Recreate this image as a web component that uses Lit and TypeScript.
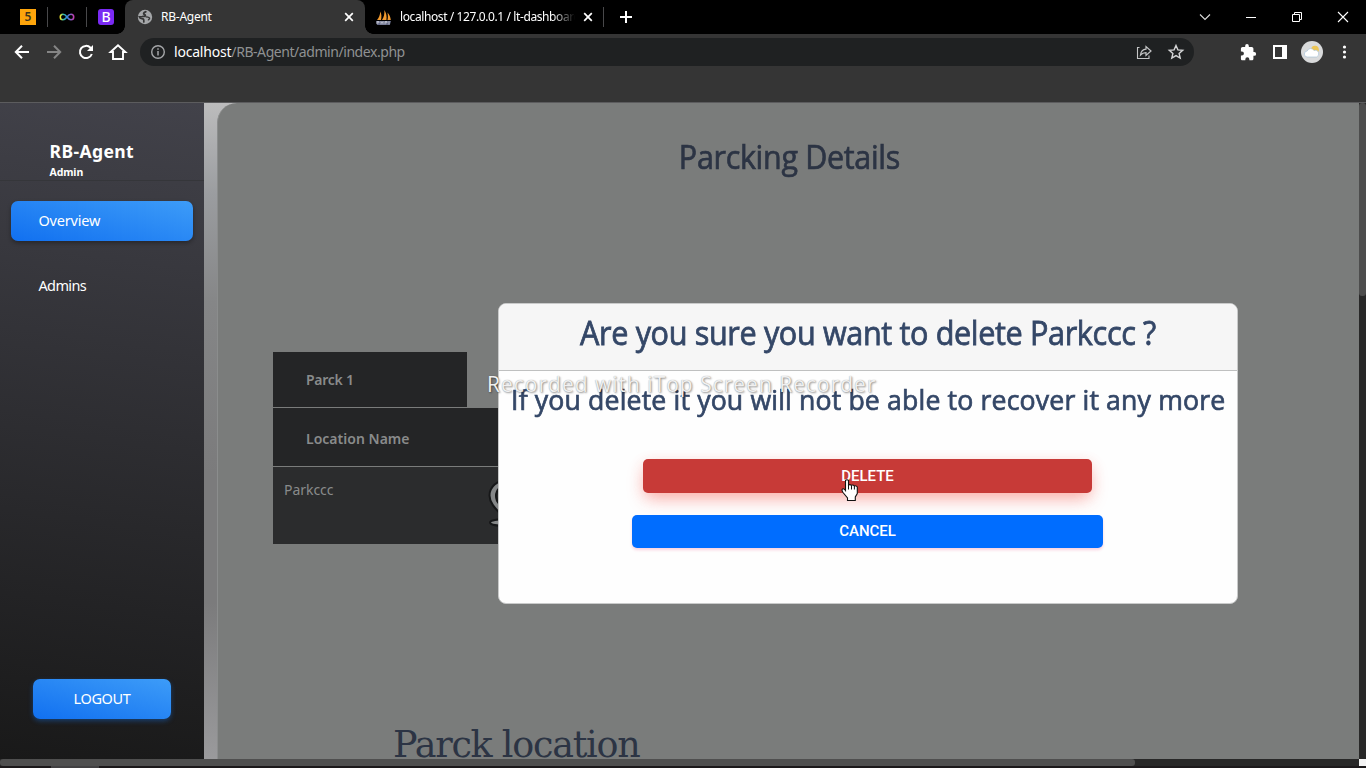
import { LitElement, html, css } from "lit";
import { customElement } from "lit/decorators.js";

const family = css`"Noto Sans", "Open Sans", sans-serif`;
const display = css`"Open Sans", "Noto Sans", sans-serif`;

@customElement("browser-bar")
class BrowserBar extends LitElement {
  static styles = css`
    :host { display: block; height: 103px; background: #353535; color: #fff; font-family: ${family}; box-sizing: border-box; border-bottom: 1px solid #5c5c5e; }
    svg { display: block; flex: none; }
    .tabs { height: 34px; background: #000; display: flex; align-items: center; }
    .pinned { display: flex; align-items: center; width: 125px; box-sizing: border-box; padding-left: 20px; }
    .rule { width: 1px; height: 20px; background: #48484a; margin: 0 11px 0 11px; }
    .rule.second { margin: 0 11px 0 10px; }
    .rule.last { margin: 0; }
    .five { width: 16px; height: 16px; background: #fea50b; color: #40351c; font: 600 12px/16px ${family}; text-align: center; }
    .bs { width: 16px; height: 16px; border-radius: 3px; background: #7a2af4; font: 500 14px/16px ${family}; text-align: center; }
    .tab { height: 34px; display: flex; align-items: center; box-sizing: border-box; font-size: 12px; white-space: nowrap; }
    .current { position: relative; width: 240px; background: #353535; border-radius: 8px 8px 0 0; padding: 0 9px 0 12px; }
    .current::before, .current::after { content: ""; position: absolute; bottom: 0; width: 8px; height: 8px; }
    .current::before { left: -8px; background: radial-gradient(circle at 0 0, #000 7.5px, #353535 8px); }
    .current::after { right: -8px; background: radial-gradient(circle at 100% 0, #000 7.5px, #353535 8px); }
    .name { flex: 1; overflow: hidden; margin-left: 8px; letter-spacing: -0.25px; line-height: 18px; }
    .other { width: 238px; padding: 0 8px 0 10px; }
    .faded { margin-right: 6px; -webkit-mask-image: linear-gradient(90deg, #000 87%, transparent); letter-spacing: -0.4px; }
    .newtab { margin-left: 14px; }
    .window { margin-left: auto; display: flex; align-items: center; padding-right: 17px; gap: 34px; }
    .tools { height: 36px; display: flex; align-items: center; padding: 0 0 0 12px; }
    .nav { display: flex; gap: 12px; width: 128px; flex: none; }
    .address { width: 1054px; flex: none; height: 28px; border-radius: 14px; background: #1f2122; display: flex; align-items: center; box-sizing: border-box; padding: 0 9px 0 10px; }
    .url { margin-left: 8px; font-size: 14px; letter-spacing: -0.44px; color: #8f9192; flex: 1; line-height: 20px; }
    .host { color: #fff; letter-spacing: -0.2px; }
    .marks { display: flex; gap: 14px; }
    .extras { display: flex; align-items: center; gap: 10px; margin-left: 44px; }
    .avatar { margin-left: -1px; }
  `;

  cross() {
    return html`<svg width="14" height="14" viewBox="0 0 14 14"><path d="M3.2 3.2l7.6 7.6M10.8 3.2l-7.6 7.6" stroke="#fff" stroke-width="1.7"/></svg>`;
  }

  render() {
    return html`
      <div class="tabs">
        <div class="pinned">
          <div class="five">5</div>
          <div class="rule"></div>
          <svg width="17" height="14" viewBox="0 0 17 14">
            <defs><linearGradient id="loop"><stop offset="0" stop-color="#f5e92b"/><stop offset=".25" stop-color="#31b9a5"/><stop offset=".5" stop-color="#348cdf"/><stop offset="1" stop-color="#c13bae"/></linearGradient></defs>
            <path d="M8 7C6.500 4.800 5.400 4.300 4 4.300a2.700 2.700 0 0 0 0 5.400C5.400 9.700 6.500 9 8 7S10.600 4.300 12 4.300a2.700 2.700 0 0 1 0 5.400C10.600 9.700 9.500 9.200 8 7z" fill="none" stroke="url(#loop)" stroke-width="1.600"/>
          </svg>
          <div class="rule second"></div>
          <div class="bs">B</div>
        </div>
        <div class="tab current">
          <svg width="16" height="16" viewBox="0 0 16 16"><circle cx="8" cy="8" r="7.200" fill="#a5a7a9"/><path d="M9.300 2.200C8.400 3.400 7 3 6.600 4.400 6.400 5.700 8.200 5 8.400 6.300c.2 1.300-2 1-3.200 1.200L2.300 7.700c.7 2.300 2.700 1.700 4 2.400 1 .6.200 1.600.6 3.500" fill="none" stroke="#353535" stroke-width="1.700"/><path d="M8.600 8.200c1.200-.6 3.400-.2 4 .9.300 1-1 1.200-1.400 2.300" fill="none" stroke="#353535" stroke-width="1.300"/></svg>
          <span class="name">RB-Agent</span>${this.cross()}
        </div>
        <div class="tab other">
          <svg width="17" height="17" viewBox="0 0 17 17"><path d="M2 11c2-2 3-5 3.300-8.500C6.500 5 6.800 8 6 11zM7 11c2-3 2.600-6 2.400-10 2 3 2.600 7 2 10zM12.500 11c.6-2.500.5-5 0-7.500 2 2 3 5 3.300 7.500z" fill="#f29a2e"/><path d="M1 12h15l-1.200 4H2z" fill="#666b87"/><path d="M2 15v-2.500h2v1.300H2M6 12v3.500M6 13.700h2M8 12v3.500M10 15.500v-3h2v1.300h-2M14 15.500V12" stroke="#c7cad7" stroke-width=".8" fill="none"/></svg>
          <span class="name faded">localhost / 127.0.0.1 / lt-dashboard</span>${this.cross()}
        </div>
        <div class="rule last"></div>
        <svg class="newtab" width="16" height="16" viewBox="0 0 16 16"><path d="M8 2v12M2 8h12" stroke="#fff" stroke-width="2"/></svg>
        <div class="window">
          <svg width="12" height="12" viewBox="0 0 12 12"><path d="M1 3.500l5 5 5-5" fill="none" stroke="#ddd" stroke-width="1.100"/></svg>
          <svg width="12" height="12" viewBox="0 0 12 12"><path d="M1 6.500h10" stroke="#fff"/></svg>
          <svg width="12" height="12" viewBox="0 0 12 12"><path d="M1.500 3.500h7v7h-7zM3.500 3V1.500h7v7H9" fill="none" stroke="#fff"/></svg>
          <svg width="12" height="12" viewBox="0 0 12 12"><path d="M1 1l10 10M11 1L1 11" stroke="#fff" stroke-width="1.100"/></svg>
        </div>
      </div>
      <div class="tools">
        <div class="nav">
          <svg width="20" height="20" viewBox="0 0 20 20"><path d="M17 10H4.500M10 3.800L3.800 10l6.200 6.200" fill="none" stroke="#fff" stroke-width="2"/></svg>
          <svg width="20" height="20" viewBox="0 0 20 20"><path d="M3 10h12.500M10 3.800l6.200 6.200-6.200 6.200" fill="none" stroke="#858585" stroke-width="2"/></svg>
          <svg width="20" height="20" viewBox="0 0 20 20"><path d="M15.800 12a6.100 6.100 0 1 1-1.300-6.200l1.500 1.700" fill="none" stroke="#fff" stroke-width="2"/><path d="M17 3v6h-6z" fill="#fff"/></svg>
          <svg width="20" height="20" viewBox="0 0 20 20"><path d="M2.600 10L10 3.200l7.400 6.800H15v7H5v-7z" fill="none" stroke="#fff" stroke-width="1.900"/></svg>
        </div>
        <div class="address">
          <svg width="16" height="16" viewBox="0 0 16 16"><circle cx="8" cy="8" r="6.300" fill="none" stroke="#a5a7a9" stroke-width="1.400"/><path d="M8 7v4.500M8 4.300v1.500" stroke="#a5a7a9" stroke-width="1.500"/></svg>
          <span class="url"><span class="host">localhost</span>/RB-Agent/admin/index.php</span>
          <div class="marks">
            <svg width="18" height="18" viewBox="0 0 18 18"><path d="M4.500 4.500H2.500v11h11.500V12.500" fill="none" stroke="#c5c6c7" stroke-width="1.100"/><path d="M5.500 12c.5-4 2.500-5.600 5.500-5.800V3.500l5 4.500-5 4.400V9.700c-2.500 0-4 .6-5.500 2.300z" fill="none" stroke="#c5c6c7" stroke-width="1.200"/></svg>
            <svg width="18" height="18" viewBox="0 0 18 18"><path d="M9 2.500l1.900 4.400 4.800.4-3.600 3.100 1.100 4.700L9 12.600l-4.200 2.500 1.100-4.700-3.600-3.100 4.800-.4z" fill="none" stroke="#d5d6d7" stroke-width="1.400"/></svg>
          </div>
        </div>
        <div class="extras">
          <svg width="20" height="20" viewBox="0 0 24 24"><path fill="#fff" d="M19.500 12H18.500V8c0-1.100-.9-2-2-2h-3.500V4.700a2.200 2.200 0 0 0-4.400 0V6H5.500c-1.100 0-2 .9-2 2v3.300h1.200a2.400 2.400 0 0 1 0 4.800H3.500V20c0 1.100.9 2 2 2h3.300v-1.200a2.400 2.400 0 0 1 4.800 0V22h2.900c1.100 0 2-.9 2-2v-3.500h1a2.250 2.250 0 0 0 0-4.500z"/></svg>
          <svg width="24" height="20" viewBox="0 0 24 20"><path fill="#fff" fill-rule="evenodd" d="M5 3h14v14H5zM7 5v10h7V5z"/></svg>
          <svg class="avatar" width="22" height="22" viewBox="0 0 22 22"><circle cx="11" cy="11" r="11" fill="#d9dadb"/><circle cx="14" cy="8.500" r="3.800" fill="#ecc555"/><path d="M6.500 16a3 3 0 0 1-.3-6 3.700 3.700 0 0 1 6.700-.6 3.300 3.300 0 0 1 2.600 6.600z" fill="#fff" stroke="#9fbcd4" stroke-width=".6"/></svg>
          <svg width="22" height="20" viewBox="0 0 22 20"><g fill="#fff"><circle cx="11.500" cy="5" r="1.600"/><circle cx="11.500" cy="10" r="1.600"/><circle cx="11.500" cy="15" r="1.600"/></g></svg>
        </div>
      </div>`;
  }
}

@customElement("side-nav")
class SideNav extends LitElement {
  static styles = css`
    :host { width: 204px; box-sizing: border-box; display: flex; flex-direction: column; background: linear-gradient(188deg, #42424a, #191919); color: #fff; font-family: ${family}; }
    .brand { height: 78px; box-sizing: border-box; padding: 36px 0 0 49.500px; border-bottom: 1px solid #35363a; }
    .title { font-size: 17.500px; font-weight: 700; line-height: 24px; letter-spacing: .4px; }
    .role { font-size: 10.500px; font-weight: 700; line-height: 14px; margin-top: 2px; letter-spacing: -.1px; }
    .item { height: 40px; line-height: 39px; margin: 20px 11px 0; padding-left: 27.500px; border-radius: 7px; font-size: 14.500px; letter-spacing: -.2px; }
    .active, .logout { background: linear-gradient(195deg, #3d9cf8, #1170f0); box-shadow: 0 2px 4px #0005; }
    .plain { margin-top: 25px; letter-spacing: -.65px; }
    .logout { margin: auto 33px 40px; height: 40px; line-height: 39px; border-radius: 7px; text-align: center; font-size: 14.500px; letter-spacing: -.35px; box-shadow: 0 2px 5px #1473e866; }
  `;
  render() {
    return html`
      <div class="brand"><div class="title">RB-Agent</div><div class="role">Admin</div></div>
      <div class="item active">Overview</div>
      <div class="item plain">Admins</div>
      <div class="logout">LOGOUT</div>`;
  }
}

@customElement("parking-page")
class ParkingPage extends LitElement {
  static styles = css`
    :host { flex: 1; display: flex; padding-left: 13px; background: linear-gradient(180deg, #bcbcbd 0, #9b9da0 90px, #858687 200px, #7b7b7c 370px, #7b7b7c 500px, #9a9a9c 100%); font-family: ${family}; overflow: hidden; }
    .panel { flex: 1; background: #7a7c7b; border-radius: 20px 0 0 0; border-left: 1px solid #8b8d8d; overflow: hidden; }
    h1 { margin: 35px 0 0; height: 38px; line-height: 37px; text-align: center; color: #2c3444; font-family: ${display}; font-size: 33.500px; font-weight: 400; letter-spacing: -.35px; padding-left: 2px; transform: scaleX(.91); -webkit-text-stroke: .7px #2c3444; }
    .table { margin: 176px 0 0 55px; width: 640px; color: #898b8b; font-size: 14px; }
    .head { background: #242526; font-weight: 600; padding-left: 33px; box-sizing: border-box; border-bottom: 1px solid #7a7c7b; }
    .first { width: 194px; height: 56px; line-height: 55px; letter-spacing: -.25px; }
    .second { height: 59px; line-height: 61px; letter-spacing: .02px; }
    .row { height: 77px; background: #2b2c2d; display: flex; padding-left: 11px; }
    .cell { width: 203px; line-height: 46px; letter-spacing: -.05px; }
    .pin { margin-top: 11px; }
    h2 { margin: 175px 0 0 175px; height: 40px; font: 400 36.500px/52px "DejaVu Serif", serif; letter-spacing: -1.250px; color: #2c3444; white-space: nowrap; }
  `;
  render() {
    return html`
      <div class="panel">
        <h1>Parcking Details</h1>
        <div class="table">
          <div class="head first">Parck 1</div>
          <div class="head second">Location Name</div>
          <div class="row">
            <span class="cell">Parkccc</span>
            <svg class="pin" width="40" height="50" viewBox="0 0 40 50"><ellipse cx="20" cy="44.500" rx="17" ry="3.600" fill="#858788" stroke="#161718" stroke-width="2"/><path d="M20 43C10 32 2.500 26 2.500 17.500a17.500 15.500 0 0 1 35 0C37.500 26 30 32 20 43z" fill="#858788" stroke="#161718" stroke-width="2"/><circle cx="20" cy="18" r="11" fill="#2b2c2d" stroke="#161718" stroke-width="2"/></svg>
          </div>
        </div>
        <h2>Parck location</h2>
      </div>`;
  }
}

@customElement("confirm-dialog")
class ConfirmDialog extends LitElement {
  static styles = css`
    :host { position: absolute; left: 498px; top: 303px; width: 740px; height: 301px; box-sizing: border-box; border: 1px solid #c9caca; border-radius: 8px; background: #fefefe; overflow: hidden; display: flex; flex-direction: column; align-items: center; font-family: ${display}; color: #344767; }
    .header { align-self: stretch; height: 67px; box-sizing: border-box; background: #f6f6f6; border-bottom: 1px solid #bfc0c0; text-align: center; font-size: 33.500px; line-height: 57px; letter-spacing: -.4px; white-space: nowrap; }
    .question { display: inline-block; transform: scaleX(.914); -webkit-text-stroke: .8px #344767; }
    .message { height: 58px; line-height: 57px; font-size: 27.500px; letter-spacing: .15px; white-space: nowrap; transform: scaleX(.97); -webkit-text-stroke: .7px #344767; }
    .button { border-radius: 5px; color: #fff; text-align: center; font: 500 15px/35px Roboto, sans-serif; letter-spacing: -.03px; margin-right: 1px; }
    .delete { margin-top: 30px; width: 449px; height: 34px; background: #c73a37; box-shadow: 0 8px 18px -3px #f4433560, 0 3px 14px #f4433522; }
    .cancel { margin-top: 22px; width: 471px; height: 33px; line-height: 33px; background: #006dff; box-shadow: 0 2px 3px #e91e6333; }
  `;
  render() {
    return html`
      <div class="header"><span class="question">Are you sure you want to delete Parkccc ?</span></div>
      <div class="message">If you delete it you will not be able to recover it any more</div>
      <div class="button delete">DELETE</div>
      <div class="button cancel">CANCEL</div>`;
  }
}

@customElement("app-root")
class AppRoot extends LitElement {
  static styles = css`
    :host { display: flex; flex-direction: column; width: 1366px; height: 768px; overflow: hidden; position: relative; background: #1c191b; }
    .page { height: 656px; display: flex; }
    .vbar { width: 7px; background: #282828; }
    .vthumb { height: 193px; background: #4d4d4d; border-radius: 3px; }
    .hbar { height: 7px; background: #282828; display: flex; justify-content: space-between; }
    .hthumb { width: 1135px; background: #4f4f4f; border-radius: 3px; }
    .corner { width: 7px; background: #f4f4f4; }
    .base { height: 2px; background: #1c191b; padding-left: 51px; }
    .strip { width: 48px; height: 2px; background: #414042; }
    .watermark { position: absolute; left: 487px; top: 371px; font: 400 21px/26px ${display}; color: #f0f0f0; letter-spacing: 1px; white-space: nowrap; text-shadow: 1px 1px 2px #0006, 0 0 1px #0005; }
    .pointer { position: absolute; left: 840px; top: 478px; }
  `;
  render() {
    return html`
      <browser-bar></browser-bar>
      <div class="page">
        <side-nav></side-nav>
        <parking-page></parking-page>
        <div class="vbar"><div class="vthumb"></div></div>
      </div>
      <div class="hbar"><div class="hthumb"></div><div class="corner"></div></div>
      <div class="base"><div class="strip"></div></div>
      <confirm-dialog></confirm-dialog>
      <div class="watermark">Recorded with iTop Screen Recorder</div>
      <svg class="pointer" width="20" height="24" viewBox="0 0 20 24"><path d="M5.500 2.500q1.500-1.600 3 0V7q1.500-1 3 .3 1.500-.9 2.800.5 2-.5 3 1.200v6.500l-2 3.500v3.500H7.500V20L3 14.500Q1 11.500 3 10.700q1.200-.2 2.500 1.800z" fill="#fff" stroke="#111" stroke-width="1.100"/><path d="M8.500 7v4.500M11.500 7.500v4M14.400 8v3.500" stroke="#111"/></svg>`;
  }
}
